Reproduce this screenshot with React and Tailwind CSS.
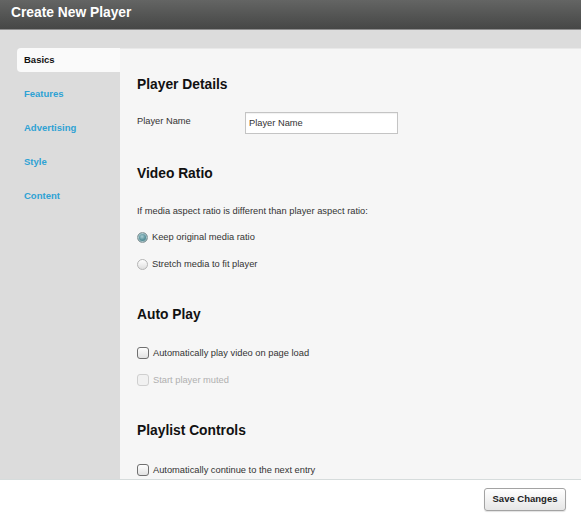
import React from 'react';

const nav = ['Features', 'Advertising', 'Style', 'Content'];

function Radio({ checked }) {
  return (
    <span
      className={
        checked
          ? 'h-[11px] w-[11px] shrink-0 rounded-full border border-[#8c9a9c] bg-[radial-gradient(circle_at_45%_40%,#a9cdd3_0%,#5b939c_45%,#3c727c_100%)] shadow-[inset_0_0_0_1px_rgba(255,255,255,0.5)]'
          : 'h-[11px] w-[11px] shrink-0 rounded-full border border-[#b4b4b4] bg-gradient-to-b from-[#ffffff] to-[#dedede]'
      }
    />
  );
}

function Check({ disabled }) {
  return (
    <span
      className={
        disabled
          ? 'h-[12px] w-[12px] shrink-0 rounded-[3px] border border-[#cfcfcf] bg-[#f1f1f1]'
          : 'h-[12px] w-[12px] shrink-0 rounded-[3px] border border-[#707070] bg-gradient-to-b from-[#fefefe] to-[#e2e2e2]'
      }
    />
  );
}

function Heading({ children, className = '' }) {
  return <h2 className={`h-[16px] text-[13.8px] font-bold leading-[16px] text-[#111] ${className}`}>{children}</h2>;
}

export default function App() {
  return (
    <div className="flex h-[519px] w-[581px] flex-col overflow-hidden bg-white font-['Liberation_Sans',Arial,sans-serif]">
      {/* title bar */}
      <div className="flex h-[30px] shrink-0 items-center border-b border-[#8e8e8e] bg-gradient-to-b from-[#646564] to-[#464746] pl-[11px] pb-[3px]">
        <span className="text-[13.8px] font-bold text-white">Create New Player</span>
      </div>

      <div className="flex min-h-0 flex-1 overflow-hidden bg-[#dcdcdc] pt-[18px]">
        {/* left nav */}
        <nav className="w-[120px] shrink-0 pl-[17px]">
          <div className="flex h-[24px] items-center rounded-l-[4px] bg-[#fafafa] pl-[7px] text-[9.5px] font-bold text-[#111]">Basics</div>
          <div className="pt-[5px]">
            {nav.map((n) => (
              <div key={n} className="flex h-[34px] items-center pl-[7px] text-[9.5px] font-bold text-[#2ea2d4]">
                {n}
              </div>
            ))}
          </div>
        </nav>

        {/* form panel */}
        <div className="flex-1 border-t border-[#e9e9e9] bg-[#f6f6f6] pl-[17px] text-[9.3px] leading-[12px] text-[#333]">
          <Heading className="mt-[28px]">Player Details</Heading>
          <div className="mt-[19px] flex items-start">
            <span className="w-[108px] pt-[3px]">Player Name</span>
            <div className="flex h-[22px] w-[153px] items-center border border-[#c4c4c4] bg-white pl-[3px] shadow-[inset_0_1px_1px_rgba(0,0,0,0.06)]">
              Player Name
            </div>
          </div>

          <Heading className="mt-[32px]">Video Ratio</Heading>
          <p className="mt-[23px]">If media aspect ratio is different than player aspect ratio:</p>
          <div className="mt-[13px] flex flex-col gap-[13px]">
            <label className="flex h-[14px] items-center gap-[4px]">
              <Radio checked />
              Keep original media ratio
            </label>
            <label className="flex h-[14px] items-center gap-[4px]">
              <Radio />
              Stretch media to fit player
            </label>
          </div>

          <Heading className="mt-[36px]">Auto Play</Heading>
          <div className="mt-[23px] flex flex-col gap-[13px]">
            <label className="flex h-[14px] items-center gap-[4px]">
              <Check />
              Automatically play video on page load
            </label>
            <label className="flex h-[14px] items-center gap-[4px] text-[#b0b0b0]">
              <Check disabled />
              Start player muted
            </label>
          </div>

          <Heading className="mt-[36px]">Playlist Controls</Heading>
          <div className="mt-[24px] flex flex-col gap-[13px]">
            <label className="flex h-[14px] items-center gap-[4px]">
              <Check />
              Automatically continue to the next entry
            </label>
          </div>
        </div>
      </div>

      {/* footer */}
      <div className="flex h-[40px] shrink-0 items-center justify-end border-t border-[#d6dcdc] bg-white pr-[15px]">
        <button className="h-[23px] w-[82px] rounded-[3px] border border-[#a3a3a3] bg-gradient-to-b from-[#ffffff] to-[#e6e6e6] text-[9.5px] font-bold text-[#222] shadow-[0_1px_1px_rgba(0,0,0,0.12)]">
          Save Changes
        </button>
      </div>
    </div>
  );
}
